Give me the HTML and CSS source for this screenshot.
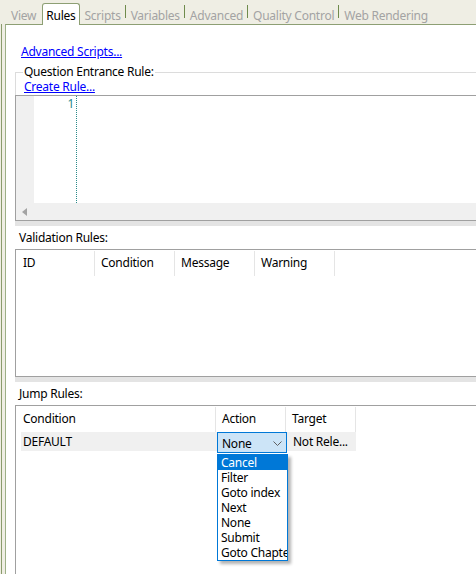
FILE: index.html
```html
<!DOCTYPE html>
<html>
<head>
    <meta charset="UTF-8">
    <title>Rules</title>
    <link rel="stylesheet" href="styles.css">
</head>
<body>
    <div class="tabs">
        <span class="tab">View</span>
        <span class="tab active">Rules</span>
        <span class="tab">Scripts</span><i class="tab-sep"></i>
        <span class="tab">Variables</span><i class="tab-sep"></i>
        <span class="tab">Advanced</span><i class="tab-sep"></i>
        <span class="tab">Quality Control</span><i class="tab-sep"></i>
        <span class="tab">Web Rendering</span>
    </div>

    <div class="frame">
        <div class="pane">
            <a href="#" class="link adv-link">Advanced Scripts...</a>

            <fieldset class="group">
                <legend>Question Entrance Rule:</legend>
                <a href="#" class="link">Create Rule...</a>
            </fieldset>

            <div class="editor">
                <div class="editor-body">
                    <div class="gutter"></div>
                    <div class="line-no">1</div>
                    <div class="code"></div>
                </div>
                <div class="hscroll">
                    <svg width="6" height="8" viewBox="0 0 6 8"><path d="M6 0 L6 8 L1 4 Z" fill="#a3a3a3"/></svg>
                </div>
            </div>

            <div class="section-label">Validation Rules:</div>
            <div class="list validation">
                <div class="list-head">
                    <div class="col first" style="width: 74px">ID</div>
                    <div class="col" style="width: 80px">Condition</div>
                    <div class="col" style="width: 80px">Message</div>
                    <div class="col" style="width: 80px">Warning</div>
                </div>
            </div>

            <div class="section-label">Jump Rules:</div>
            <div class="list jump">
                <div class="list-head">
                    <div class="col first" style="width: 195px">Condition</div>
                    <div class="col" style="width: 70px">Action</div>
                    <div class="col" style="width: 70px">Target</div>
                </div>
                <div class="list-row">
                    <div class="cell first" style="width: 196px">DEFAULT</div>
                    <div class="cell combo-cell" style="width: 70px">
                        <div class="combo">
                            <span>None</span>
                            <svg width="9" height="5" viewBox="0 0 9 5"><path d="M0.5 0.5 L4.5 4.5 L8.5 0.5" fill="none" stroke="#606060" stroke-width="1"/></svg>
                        </div>
                        <ul class="dropdown">
                            <li class="selected">Cancel</li>
                            <li>Filter</li>
                            <li>Goto index</li>
                            <li>Next</li>
                            <li>None</li>
                            <li>Submit</li>
                            <li>Goto Chapter</li>
                        </ul>
                    </div>
                    <div class="cell" style="width: 69px">Not Rele...</div>
                </div>
            </div>
        </div>
    </div>
</body>
</html>
```

FILE: styles.css
```css
html, body {
    height: 100%;
}

body {
    margin: 0;
    background: #efeee4;
    font-family: 'Noto Sans', 'Open Sans', sans-serif;
    font-size: 12px;
    letter-spacing: -0.25px;
    color: #000;
    overflow: hidden;
}

/* tab strip */

.tabs {
    display: flex;
    align-items: flex-end;
    height: 24px;
    padding-left: 6px;
}

.tab {
    padding: 0 4px 0 5px;
    line-height: 16px;
    color: #a3a3a3;
    white-space: nowrap;
}

.tab.active {
    position: relative;
    z-index: 1;
    margin-left: 2px;
    margin-bottom: -1px;
    padding: 4px 3px 1px 3px;
    color: #000;
    background: #fff;
    border: 1px solid #8d9f74;
    border-bottom: none;
    border-radius: 3px 3px 0 0;
}

.tab-sep {
    align-self: flex-start;
    width: 1px;
    height: 13px;
    margin-top: 5px;
    background: #6f8b4c;
}

/* page frame */

.frame {
    height: calc(100% - 24px);
    margin-left: 1px;
    padding-left: 3px;
    border-left: 1px solid #8a9b6c;
}

.pane {
    height: 100%;
    background: #fff;
    border-left: 1px solid #9caf86;
    border-top: 1px solid #8d9f74;
    padding-left: 9px;
}

.link {
    display: block;
    width: max-content;
    color: #0000ff;
    text-decoration: underline;
    line-height: 16px;
}

.adv-link {
    margin-left: 6px;
    padding-top: 19px;
}

/* group box */

.group {
    margin: 5px 0 0 0;
    padding: 0 0 0 8px;
    min-width: 0;
    border: 1px solid #dcdcdc;
    border-width: 1px 0 0 1px;
}

.group legend {
    padding: 0 1px;
    margin-left: -1px;
    line-height: 14px;
}

/* script editor */

.editor {
    margin-right: -20px;
    border: 1px solid #a0a0a0;
}

.editor-body {
    display: flex;
    height: 107px;
}

.gutter {
    width: 18px;
    background: #f0f0f0;
}

.line-no {
    width: 40px;
    text-align: right;
    color: #2b8a8a;
    line-height: 16px;
    border-right: 1px dotted #2b8a8a;
    padding-right: 2px;
}

.code {
    flex: 1;
}

.hscroll {
    display: flex;
    align-items: center;
    height: 17px;
    padding-left: 5px;
    background: #f0f0f0;
}

.hscroll svg {
    display: block;
}

.editor,
.validation {
    box-shadow: 0 5px 0 #e4e4e4;
}

.section-label {
    margin: 9px 0 0 4px;
    line-height: 16px;
}

/* list views */

.list {
    margin-top: 3px;
    margin-right: -20px;
    padding-left: 5px;
    border: 1px solid #a0a0a0;
    background: #fff;
}

.validation {
    height: 126px;
}

.jump {
    height: 200px;
    border-bottom: none;
}

.list-head {
    display: flex;
    height: 25px;
    padding-top: 1px;
}

.col {
    box-sizing: border-box;
    padding-left: 6px;
    line-height: 24px;
    border-right: 1px solid #e5e5e5;
    white-space: nowrap;
    overflow: hidden;
}

.col.first,
.cell.first {
    padding-left: 2px;
}

.list-row {
    display: flex;
    height: 19px;
    width: max-content;
    background: #f0f0f0;
}

.cell {
    box-sizing: border-box;
    padding-left: 6px;
    line-height: 19px;
    white-space: nowrap;
}

.combo-cell {
    position: relative;
    padding: 0;
}

.combo {
    display: flex;
    align-items: center;
    justify-content: space-between;
    box-sizing: border-box;
    height: 21px;
    padding: 1px 4px 0 4px;
    background: #cce4f7;
    border: 1px solid #0078d7;
}

.dropdown {
    position: absolute;
    top: 22px;
    left: 0;
    z-index: 2;
    box-sizing: border-box;
    width: 71px;
    margin: 0;
    padding: 0;
    list-style: none;
    background: #fff;
    border: 1px solid #0078d7;
    box-shadow: 3px 3px 3px rgba(0, 0, 0, 0.3);
    overflow: hidden;
}

.dropdown li {
    padding-left: 3px;
    line-height: 15px;
    white-space: nowrap;
}

.dropdown li.selected {
    background: #0078d7;
    color: #fff;
}
```
